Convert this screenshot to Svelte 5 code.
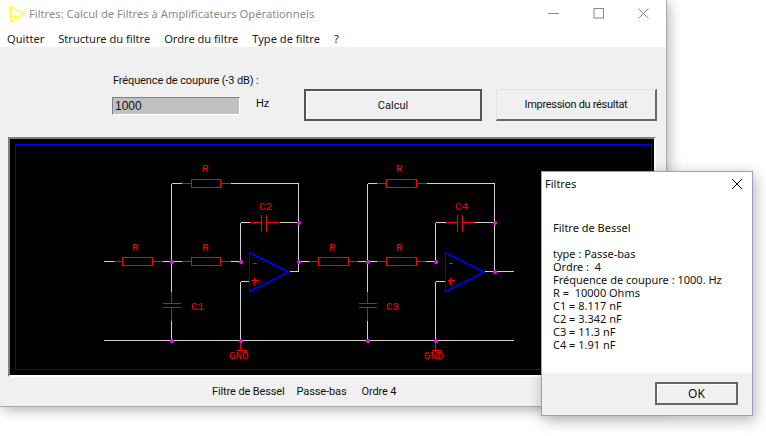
<script lang="ts">
    const menus = ["Quitter", "Structure du filtre", "Ordre du filtre", "Type de filtre", "?"];

    // page coordinates, the svg viewBox starts at the panel corner
    const wires = [
        "M103 261H113", "M162 261H181", "M230 261H240", "M171 183V291", "M171 320V340", "M171 183H181", "M230 183H298",
        "M298 183V271", "M240 222V261", "M240 222H249", "M279 222H298", "M240 281H249", "M240 281V340", "M289 271H298",
        "M298 261H308", "M357 261H376", "M425 261H435", "M367 183V291", "M367 320V340", "M367 183H376", "M426 183H494",
        "M494 183V271", "M435 222V261", "M435 222H445", "M474 222H494", "M435 281H445", "M435 281V340", "M484 271H513",
        "M103 340H513"
    ];
    const resistors = [
        { x: 122, y: 257, w: 30, a: 113, b: 162 },
        { x: 191, y: 257, w: 29, a: 181, b: 230 },
        { x: 191, y: 179, w: 29, a: 181, b: 230 },
        { x: 318, y: 257, w: 30, a: 308, b: 357 },
        { x: 386, y: 257, w: 30, a: 376, b: 425 },
        { x: 386, y: 179, w: 30, a: 376, b: 426 }
    ];
    const seriesCaps = [
        { a: 249, p: 261, b: 279 },
        { a: 445, p: 457, b: 474 }
    ];
    const shuntCaps = [171, 367];
    const opamps = [249, 445];
    const grounds = [240, 435];
    const dots = [
        [171, 261], [240, 261], [298, 222], [298, 261], [171, 340], [240, 340],
        [367, 261], [435, 261], [494, 222], [494, 271], [367, 340], [435, 340]
    ];
    const labels = [
        { t: "R", x: 202, y: 172 }, { t: "C2", x: 259, y: 210 }, { t: "R", x: 132, y: 251 }, { t: "R", x: 202, y: 251 },
        { t: "C1", x: 191, y: 310 }, { t: "R", x: 396, y: 172 }, { t: "C4", x: 455, y: 210 }, { t: "R", x: 329, y: 251 },
        { t: "R", x: 396, y: 251 }, { t: "C3", x: 386, y: 310 }, { t: "GND", x: 229, y: 359 }, { t: "GND", x: 424, y: 359 }
    ];

    const results = [
        "type : Passe-bas", "Ordre :  4", "Fréquence de coupure : 1000. Hz", "R =  10000 Ohms",
        "C1 = 8.117 nF", "C2 = 3.342 nF", "C3 = 11.3 nF", "C4 = 1.91 nF"
    ];
</script>

<div class="window">
    <header class="titlebar">
        <svg class="appicon" width="16" height="17" viewBox="0 0 16 17">
            <path d="M1.5 1.5V16.5L15.5 9Z M0 5.5H1.5M0 12.5H1.5M4 11.5H8M6 9.5V13.5" fill="none" stroke="#ffff00" />
        </svg>
        <span class="title">Filtres: Calcul de Filtres à Amplificateurs Opérationnels</span>
        <div class="controls">
            <svg width="11" height="11" viewBox="0 0 11 11"><path d="M0 5.5H11" stroke="#8a8a8a" /></svg>
            <svg width="11" height="11" viewBox="0 0 11 11"><rect x="1" y=".5" width="9.5" height="9.5" fill="none" stroke="#8a8a8a" /></svg>
            <svg width="11" height="11" viewBox="0 0 11 11"><path d="M.5 .5L10.5 10.5M10.5 .5L.5 10.5" stroke="#8a8a8a" /></svg>
        </div>
    </header>
    <nav class="menubar">
        {#each menus as m}
            <span>{m}</span>
        {/each}
    </nav>
    <main class="client">
        <section class="toolbar">
            <div class="freq">
                <label for="fc">Fréquence de coupure (-3 dB) :</label>
                <div class="freq-row">
                    <input id="fc" value="1000" />
                    <span>Hz</span>
                </div>
            </div>
            <button class="calc">Calcul</button>
            <button class="print">Impression du résultat</button>
        </section>
        <div class="panel">
            <svg width="644" height="236" viewBox="10 139 644 236" shape-rendering="crispEdges">
                <rect x="15.5" y="144.5" width="636" height="225" fill="none" stroke="#0000ff" />
                <g transform="translate(.5 .5)" fill="none">
                    {#each wires as d}
                        <path {d} stroke="#d0d0d0" />
                    {/each}
                    {#each resistors as r}
                        <path d="M{r.a} {r.y + 4}H{r.x}M{r.x + r.w} {r.y + 4}H{r.b}" stroke="#ff0000" />
                        <rect x={r.x} y={r.y} width={r.w} height="8" stroke="#ff0000" />
                    {/each}
                    {#each seriesCaps as c}
                        <path d="M{c.a} 222H{c.p}M{c.p} 214V231M{c.p + 5} 214V231M{c.p + 5} 222H{c.b}" stroke="#ff0000" />
                    {/each}
                    {#each shuntCaps as x}
                        <path d="M{x} 291V303M{x - 9} 303H{x + 9}M{x - 9} 307H{x + 9}M{x} 307V320" stroke="#ff0000" />
                    {/each}
                    {#each opamps as x}
                        <path d="M{x} 252L{x + 39} 271.5L{x} 291Z" stroke="#0000ff" />
                        <path d="M{x + 3} 263H{x + 7}M{x + 2} 280H{x + 9}M{x + 5} 277V284" stroke="#ff0000" />
                    {/each}
                    {#each grounds as x}
                        <path d="M{x} 340V350M{x - 4} 350H{x + 6}" stroke="#ff0000" />
                    {/each}
                </g>
                {#each dots as [x, y]}
                    <path d="M{x - 1} {y}h4v2h-4zM{x} {y - 1}h2v4h-2z" fill="#ff00ff" />
                {/each}
                {#each labels as l}
                    <text x={l.x} y={l.y} class="part">{l.t}</text>
                {/each}
            </svg>
        </div>
        <footer class="status">
            <span>Filtre de Bessel</span>
            <span>Passe-bas</span>
            <span class="order">Ordre 4</span>
        </footer>
    </main>
</div>

<div class="dialog">
    <header class="dialog-title">
        <span>Filtres</span>
        <svg width="12" height="12" viewBox="0 0 12 12"><path d="M1 1L11 11M11 1L1 11" stroke="#000" fill="none" /></svg>
    </header>
    <div class="dialog-body">
        <p class="heading">Filtre de Bessel</p>
        {#each results as line}
            <p>{line}</p>
        {/each}
    </div>
    <div class="dialog-foot">
        <button class="ok">OK</button>
    </div>
</div>

<style>
    :global(body) {
        margin: 0;
        background: #fff;
        overflow: hidden;
    }

    .window {
        position: absolute;
        left: 0;
        top: 0;
        width: 667px;
        height: 407px;
        box-sizing: border-box;
        border-right: 1px solid #a8a8a8;
        border-bottom: 1px solid #a8a8a8;
        box-shadow: 2px 3px 12px rgba(0, 0, 0, 0.3);
        display: flex;
        flex-direction: column;
        background: #fff;
    }

    .titlebar {
        height: 27px;
        display: flex;
        align-items: center;
        padding-left: 9px;
        font: 11.2px "Noto Sans", sans-serif;
        color: #8b8b8b;
    }

    .appicon {
        margin-right: 4px;
    }

    .title {
        flex: 1;
    }

    .controls {
        display: flex;
        gap: 34px;
        margin-right: 17px;
        height: 11px;
    }

    .menubar {
        height: 20px;
        display: flex;
        gap: 14px;
        padding: 4px 0 0 7px;
        box-sizing: border-box;
        align-items: flex-start;
        font: 11.1px "Noto Sans", sans-serif;
        color: #222;
    }

    .client {
        flex: 1;
        background: #f0f0f0;
        display: flex;
        flex-direction: column;
        font: 11px Roboto, sans-serif;
        letter-spacing: -0.12px;
        color: #111;
    }

    .toolbar {
        height: 90px;
        box-sizing: border-box;
        padding: 26px 0 0 112px;
        display: flex;
        align-items: flex-start;
    }

    .freq {
        width: 192px;
    }

    .freq label {
        display: block;
        margin: 0 0 9px 1px;
        line-height: 15px;
    }

    .freq-row {
        display: flex;
        gap: 16px;
    }

    .freq-row span {
        line-height: 14px;
    }

    input {
        width: 128px;
        height: 18px;
        box-sizing: border-box;
        padding: 0 0 0 2px;
        background: #c0c0c0;
        border: 1px solid;
        border-color: #808080 #fff #fff #808080;
        font: 12px "Liberation Sans", sans-serif;
        color: #111;
    }

    button {
        font: inherit;
        color: #111;
        background: #f0f0f0;
        padding: 0;
        height: 32px;
        margin-top: 16px;
        box-sizing: border-box;
        border: 1px solid;
    }

    .calc {
        width: 178px;
        margin-right: 14px;
        border: 2px solid #555;
        box-shadow: inset 1px 1px 0 #fff;
    }

    .print {
        width: 161px;
        letter-spacing: -0.3px;
        border-right-width: 2px;
        border-bottom-width: 2px;
        border-color: #e4e4e4 #696969 #696969 #e4e4e4;
    }

    .panel {
        margin-left: 8px;
        width: 648px;
        height: 240px;
        box-sizing: border-box;
        background: #000;
        border: 2px solid;
        border-color: #808080 #fff #fff #808080;
        line-height: 0;
    }

    .part {
        font: 11px "Liberation Mono", monospace;
        fill: #ff0000;
    }

    .status {
        flex: 1;
        display: flex;
        align-items: center;
        gap: 12px;
        padding-left: 212px;
    }

    .order {
        margin-left: 3px;
    }

    .dialog {
        position: absolute;
        left: 541px;
        top: 171px;
        width: 212px;
        height: 245px;
        box-sizing: border-box;
        border: 1px solid #9a9ad6;
        background: #fff;
        box-shadow: 2px 4px 14px rgba(0, 0, 0, 0.3);
        display: flex;
        flex-direction: column;
        font: 11px "Noto Sans", sans-serif;
        color: #111;
    }

    .dialog-title {
        height: 23px;
        display: flex;
        align-items: center;
        justify-content: space-between;
        padding: 0 9px 0 3px;
    }

    .dialog-body {
        flex: 1;
        padding: 26px 0 0 11px;
    }

    .dialog-body p {
        margin: 0;
        line-height: 13px;
        white-space: pre;
    }

    .heading {
        margin-bottom: 13px !important;
    }

    .dialog-foot {
        height: 42px;
        background: #f0f0f0;
        display: flex;
        justify-content: flex-end;
        padding-right: 14px;
        align-items: flex-start;
    }

    .ok {
        width: 83px;
        height: 23px;
        margin-top: 9px;
        border: 2px solid #666;
        box-shadow: inset 1px 1px 0 #fff;
        font: 12px "Noto Sans", sans-serif;
    }
</style>
